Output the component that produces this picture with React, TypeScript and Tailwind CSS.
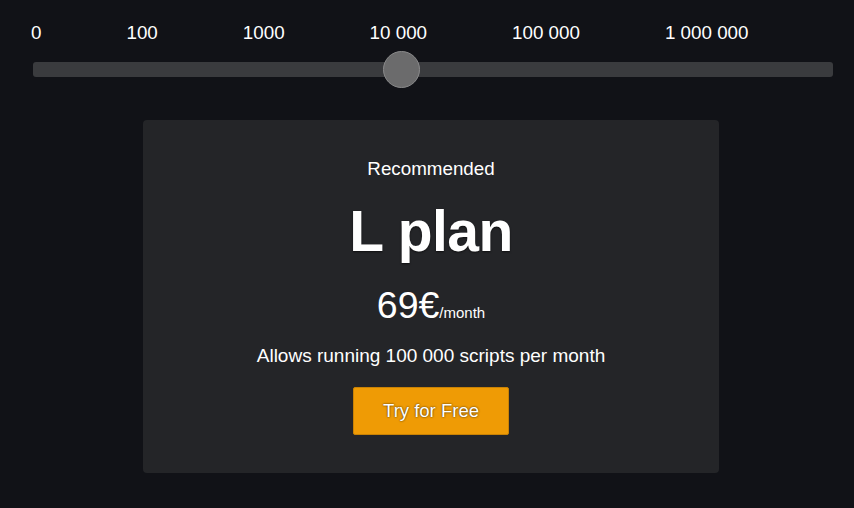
const ticks = ["0", "100", "1000", "10 000", "100 000", "1 000 000"];

export default function App() {
  return (
    <div className="w-[854px] h-[508px] bg-[#111217] text-white font-['Liberation_Sans',Arial,sans-serif] overflow-hidden">
      {/* Slider labels */}
      <div className="flex gap-[85px] pl-[31px] pt-[22px] text-[18.8px] leading-[22px]">
        {ticks.map((t) => (
          <span key={t} className="whitespace-nowrap">
            {t}
          </span>
        ))}
      </div>

      {/* Slider track */}
      <div className="relative ml-[33px] mt-[18px] w-[800px] h-[15px] rounded-[3px] bg-[#3a3b3e]">
        <div className="absolute left-[350px] top-[-11px] w-[37px] h-[37px] rounded-full bg-[#6b6b6c] border border-[#8a8a8b]"></div>
      </div>

      {/* Plan card */}
      <div className="ml-[143px] mt-[43px] w-[576px] rounded-[4px] bg-[#242528] pt-[38px] pb-[38px] flex flex-col items-center">
        <div className="text-[18.8px] leading-[22px]">Recommended</div>
        <div className="mt-[19px] text-[57px] leading-[64px] font-bold tracking-[-0.01em] [text-shadow:0_1px_2px_rgba(0,0,0,0.6)]">
          L plan
        </div>
        <div className="mt-[22px] h-[40px] flex items-baseline">
          <span className="text-[37.5px] leading-[40px]">69€</span>
          <span className="text-[15px] leading-[40px]">/month</span>
        </div>
        <div className="mt-[19px] text-[19px] leading-[24px]">
          Allows running 100 000 scripts per month
        </div>
        <button className="mt-[19px] w-[156px] h-[48px] rounded-[2px] bg-[#ef9b05] border border-[#c98205] text-[18.5px] text-white [text-shadow:0_0_2px_rgba(0,0,0,0.85)]">
          Try for Free
        </button>
      </div>
    </div>
  );
}
